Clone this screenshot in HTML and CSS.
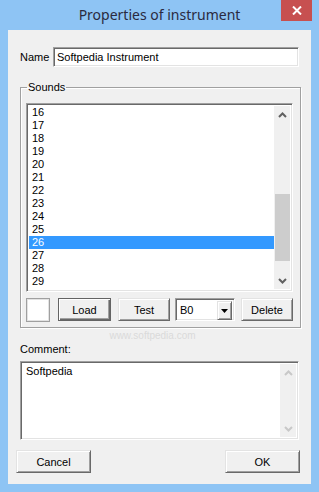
FILE: index.html
```html
<!DOCTYPE html>
<html lang="en">
<head>
    <meta charset="UTF-8">
    <title>Properties of instrument</title>
    <link rel="stylesheet" href="styles.css">
</head>
<body>

<div class="window">
    <div class="titlebar">
        <span></span>
        <div class="title">Properties of instrument</div>
        <div class="close">
            <svg width="10" height="9" viewBox="0 0 10 9"><path d="M1 0.5 L9 8.5 M9 0.5 L1 8.5" stroke="#fff" stroke-width="2"/></svg>
        </div>
    </div>

    <div class="client">
        <div class="name-row">
            <label>Name</label>
            <div class="field sunken">Softpedia Instrument</div>
        </div>

        <fieldset class="group">
            <legend>Sounds</legend>
            <div class="listbox sunken">
                <div class="items">
                    <div class="item">16</div>
                    <div class="item">17</div>
                    <div class="item">18</div>
                    <div class="item">19</div>
                    <div class="item">20</div>
                    <div class="item">21</div>
                    <div class="item">22</div>
                    <div class="item">23</div>
                    <div class="item">24</div>
                    <div class="item">25</div>
                    <div class="item selected">26</div>
                    <div class="item">27</div>
                    <div class="item">28</div>
                    <div class="item">29</div>
                    <div class="item">30</div>
                </div>
                <div class="vscroll">
                    <div class="arrow"><svg width="9" height="6" viewBox="0 0 9 6"><path d="M1 5 L4.5 1.5 L8 5" fill="none" stroke="#606060" stroke-width="2"/></svg></div>
                    <div class="track-top"></div>
                    <div class="thumb"></div>
                    <div class="track-rest"></div>
                    <div class="arrow"><svg width="9" height="6" viewBox="0 0 9 6"><path d="M1 1 L4.5 4.5 L8 1" fill="none" stroke="#606060" stroke-width="2"/></svg></div>
                </div>
            </div>

            <div class="tools">
                <div class="swatch"></div>
                <button class="btn default load">Load</button>
                <button class="btn test">Test</button>
                <div class="combo sunken">
                    <span class="combo-text">B0</span>
                    <span class="drop">
                        <svg width="7" height="4" viewBox="0 0 7 4"><path d="M0 0 H7 L3.5 4 Z" fill="#000"/></svg>
                    </span>
                </div>
                <button class="btn delete">Delete</button>
            </div>
        </fieldset>

        <div class="watermark">www.softpedia.com</div>

        <div class="comment-label">Comment:</div>
        <div class="memo sunken">
            <div class="memo-text">Softpedia</div>
            <div class="vscroll disabled">
                <div class="arrow"><svg width="9" height="6" viewBox="0 0 9 6"><path d="M1 5 L4.5 1.5 L8 5" fill="none" stroke="#c8c8c8" stroke-width="2"/></svg></div>
                <div class="track-rest"></div>
                <div class="arrow"><svg width="9" height="6" viewBox="0 0 9 6"><path d="M1 1 L4.5 4.5 L8 1" fill="none" stroke="#c8c8c8" stroke-width="2"/></svg></div>
            </div>
        </div>

        <div class="footer">
            <button class="btn wide">Cancel</button>
            <button class="btn wide">OK</button>
        </div>
    </div>
</div>

</body>
</html>
```

FILE: styles.css
```css
* {
    box-sizing: border-box;
}
body {
    margin: 0;
    width: 319px;
    height: 492px;
    overflow: hidden;
    background-color: #8ec4f4;
    font-family: 'Liberation Sans', Arial, sans-serif;
    font-size: 11px;
    color: #000;
}
.window {
    display: flex;
    flex-direction: column;
    height: 100%;
}
.titlebar {
    height: 30px;
    display: grid;
    grid-template-columns: 38px 1fr 38px;
    flex-shrink: 0;
}
.title {
    font-family: 'Noto Sans', sans-serif;
    font-size: 14px;
    color: #2a2a40;
    text-align: center;
    line-height: 30px;
}
.close {
    width: 31px;
    height: 21px;
    background-color: #c75050;
    display: flex;
    align-items: center;
    justify-content: center;
}
.client {
    background-color: #f0f0f0;
    margin: 0 8px 8px 8px;
    height: 454px;
    padding: 17px 12px 0 12px;
    display: flex;
    flex-direction: column;
}

/* classic 3D frames */
.sunken {
    border: 1px solid;
    border-color: #a0a0a0 #fff #fff #a0a0a0;
    box-shadow: inset 1px 1px 0 #696969, inset -1px -1px 0 #e3e3e3;
    background: #fff;
}
.btn {
    font-family: inherit;
    font-size: 11px;
    color: #000;
    background-color: #f0f0f0;
    border: 1px solid;
    border-color: #e3e3e3 #696969 #696969 #e3e3e3;
    box-shadow: inset 1px 1px 0 #fff, inset -1px -1px 0 #a0a0a0;
    padding: 0;
    height: 23px;
}
.btn.default {
    border-color: #646464;
    box-shadow: inset 1px 1px 0 #fff, inset -1px -1px 0 #696969, inset -2px -2px 0 #a0a0a0;
}

.name-row {
    display: flex;
    align-items: center;
    height: 20px;
}
.name-row label {
    width: 33px;
}
.field {
    flex: 1;
    height: 20px;
    line-height: 16px;
    padding: 1px 3px;
}

.group {
    margin: 14px 0 0 0;
    padding: 9px 7px 5px 5px;
    border: 1px solid #a0a0a0;
    box-shadow: 1px 1px 0 #fff, inset 1px 1px 0 #fff;
}
.group legend {
    padding: 0 1px;
    margin-left: 1px;
    line-height: 13px;
}
.listbox {
    height: 189px;
    display: flex;
    padding: 2px;
}
.items {
    flex: 1;
    overflow: hidden;
}
.item {
    height: 13px;
    line-height: 13px;
    padding-left: 3px;
}
.item.selected {
    background-color: #3399ff;
    color: #fff;
}
.vscroll {
    width: 16px;
    background-color: #f0f0f0;
    display: flex;
    flex-direction: column;
    flex-shrink: 0;
}
.arrow {
    height: 17px;
    display: flex;
    align-items: center;
    justify-content: center;
}
.track-top {
    height: 71px;
}
.thumb {
    height: 67px;
    margin-left: 1px;
    background-color: #cdcdcd;
}
.track-rest {
    flex: 1;
}

.tools {
    display: flex;
    align-items: flex-start;
    margin-top: 6px;
    height: 24px;
}
.swatch {
    width: 24px;
    height: 24px;
    background: #fff;
    border: 1px solid #a0a0a0;
    box-shadow: inset 1px 1px 0 #e3e3e3, inset -1px -1px 0 #e3e3e3;
}
.load {
    width: 53px;
    margin-left: 8px;
}
.test {
    width: 52px;
    margin-left: 7px;
}
.combo {
    width: 60px;
    height: 23px;
    margin-left: 5px;
    display: flex;
    padding: 2px;
}
.combo-text {
    flex: 1;
    line-height: 19px;
    padding-left: 2px;
}
.drop {
    width: 15px;
    height: 19px;
    display: flex;
    align-items: center;
    justify-content: center;
    background-color: #f0f0f0;
    border: 1px solid;
    border-color: #e3e3e3 #696969 #696969 #e3e3e3;
    box-shadow: inset 1px 1px 0 #fff, inset -1px -1px 0 #a0a0a0;
}
.delete {
    width: 52px;
    margin-left: 6px;
}

.watermark {
    height: 15px;
    line-height: 15px;
    text-align: center;
    font-size: 10px;
    color: #dadada;
    padding-right: 14px;
}
.comment-label {
    line-height: 13px;
    margin-bottom: 5px;
}
.memo {
    height: 79px;
    display: flex;
    padding: 2px;
}
.memo-text {
    flex: 1;
    padding: 1px 3px;
    line-height: 13px;
}
.footer {
    display: flex;
    justify-content: space-between;
    margin: 10px -1px 0 -4px;
}
.btn.wide {
    width: 75px;
}
```
